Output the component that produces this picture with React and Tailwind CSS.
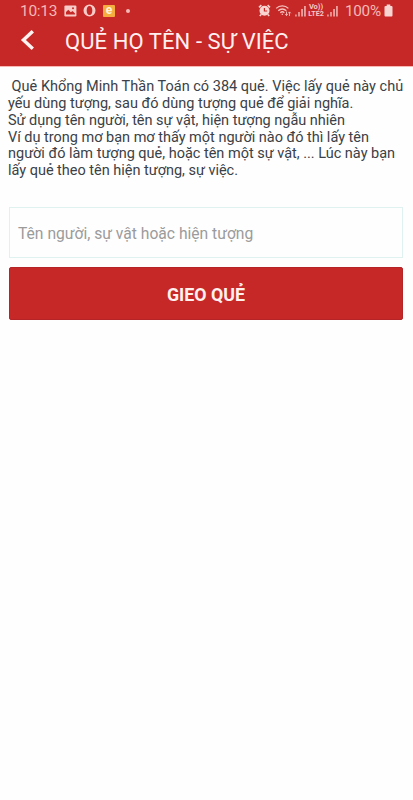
function Signal({ className }) {
  return (
    <svg className={className} width="12" height="12" viewBox="0 0 12 12" fill="#f4bcb8">
      <rect x="0.3" y="9.5" width="1.3" height="2" />
      <rect x="3.3" y="7" width="1.4" height="4.5" />
      <rect x="6.3" y="4" width="1.5" height="7.5" />
      <rect x="9.2" y="1" width="1.5" height="10.5" />
    </svg>
  );
}

function StatusBar() {
  return (
    <div className="flex h-[21px] items-center text-[#f3b9b5]">
      <span className="ml-5 w-[37px] whitespace-nowrap pt-px text-[15.5px] leading-[21px] tracking-[-0.3px]">10:13</span>
      <svg className="ml-[7px] shrink-0" width="13" height="12" viewBox="0 0 13 12">
        <rect x="0.4" y="0.4" width="12" height="11" rx="1.2" fill="#f7cbc7" />
        <path d="M2 9.5V7l2.3-2.2 2.5 2.5L8.5 6l2.4 2.2v1.3z" fill="#c62828" />
        <circle cx="9" cy="3.3" r="1" fill="#c62828" />
      </svg>
      <svg className="ml-[6px] shrink-0" width="13" height="13" viewBox="0 0 13 13">
        <path fillRule="evenodd" d="M6.5.5a6 6 0 1 0 0 12a6 6 0 1 0 0-12zM6.5 2C8.4 2 9.3 4 9.3 6.5S8.4 11 6.5 11 3.7 9 3.7 6.5 4.6 2 6.5 2z" fill="#f7cbc7" />
      </svg>
      <span className="ml-[7px] flex h-3 w-3 shrink-0 items-center justify-center rounded-[1px] bg-[#f5ad3f] text-[12px] font-bold leading-none text-[#fff2d9]">
        <span className="-mt-px">e</span>
      </span>
      <span className="ml-[11px] h-1 w-1 shrink-0 rounded-full bg-[#f3bab6]" />
      <svg className="ml-[128px] shrink-0" width="13" height="13" viewBox="0 0 13 13">
        <circle cx="6.5" cy="6.7" r="5" fill="#f9d3d0" />
        <path d="M1 3.4L3.4 1.2M12 3.4L9.6 1.2M3.1 10.5L1.8 12M9.9 10.5L11.2 12" stroke="#f9d3d0" strokeWidth="1.6" />
        <path d="M6.4 4v3h2.8" fill="none" stroke="#c62828" strokeWidth="1.2" />
      </svg>
      <svg className="ml-[4px] shrink-0" width="17" height="13" viewBox="0 0 17 13" fill="none" stroke="#f5c1bd" strokeWidth="1.3">
        <path d="M1.2 4.4C4.6.9 10 .9 13.4 4.4M3.3 6.7c2.3-2.3 5.7-2.3 8 0M5.3 8.7c1.2-1.1 2.8-1.1 4 0" />
        <circle cx="7.3" cy="10.3" r="0.8" fill="#f5c1bd" stroke="none" />
        <path d="M11.5 7.5v4M10.2 10.2l1.3 1.4 1.3-1.4M14.5 12V8M13.2 9.3l1.3-1.4 1.3 1.4" strokeWidth="0.9" />
      </svg>
      <Signal className="ml-[3px] shrink-0" />
      <div className="ml-px flex w-[16px] shrink-0 flex-col items-center text-[7.5px] font-bold leading-[8px] text-[#f7c9c5]">
        <span>Vo))</span>
        <span className="-mt-px whitespace-nowrap text-[7.2px] leading-[8px]">LTE2</span>
      </div>
      <Signal className="ml-[3px] shrink-0" />
      <span className="ml-[6px] w-[36px] shrink-0 whitespace-nowrap pt-px text-[15.3px] leading-[21px] tracking-[-0.3px]">100%</span>
      <svg className="ml-[3px] shrink-0" width="9" height="13" viewBox="0 0 9 13" fill="#f9d5d2">
        <path d="M2.7.5h3.6v1.4h1.2a1 1 0 0 1 1 1v8.6a1 1 0 0 1-1 1h-6a1 1 0 0 1-1-1V2.9a1 1 0 0 1 1-1h1.2z" />
      </svg>
    </div>
  );
}

const lines = [
  { text: "\u00a0Quẻ Khổng Minh Thần Toán có 384 quẻ. Việc lấy quẻ này chủ", style: "tracking-[0.01px]" },
  { text: "yếu dùng tượng, sau đó dùng tượng quẻ để giải nghĩa.", style: "tracking-[0px]" },
  { text: "Sử dụng tên người, tên sự vật, hiện tượng ngẫu nhiên", style: "tracking-[-0.02px]" },
  { text: "Ví dụ trong mơ bạn mơ thấy một người nào đó thì lấy tên", style: "tracking-[-0.015px]" },
  { text: "người đó làm tượng quẻ, hoặc tên một sự vật, ... Lúc này bạn", style: "tracking-[-0.01px]" },
  { text: "lấy quẻ theo tên hiện tượng, sự việc.", style: "tracking-[-0.02px]" },
];

export default function App() {
  return (
    <div className="h-[800px] w-[413px] overflow-hidden bg-[#fefefe] font-[Roboto,sans-serif]">
      <header className="h-[66px] bg-[#c62828]">
        <StatusBar />
        <div className="flex h-[40px] items-center">
          <svg className="ml-5 shrink-0" width="16" height="22" viewBox="0 0 16 22" fill="none" stroke="#fff3f2" strokeWidth="3.4">
            <path d="M12.8 1.2L3.4 10l9.4 8.8" />
          </svg>
          <h1 className="ml-[29px] whitespace-nowrap pt-[2px] text-[22px] leading-[40px] tracking-[0.08px] text-[#fff0ef]">QUẺ HỌ TÊN - SỰ VIỆC</h1>
        </div>
      </header>
      <div className="h-px bg-[#fab8b5]" />
      <main className="px-[9px] pt-[12px]">
        <div className="h-[101px] text-[14.5px] leading-[16.85px] text-[#3b4146]">
          {lines.map((line) => (
            <p key={line.text} className={`-ml-px whitespace-nowrap ${line.style}`}>{line.text}</p>
          ))}
        </div>
        <input
          className="mt-[27px] block h-[51px] w-[394px] border border-[#dff2ef] bg-[#fefefe] px-2 pt-[2px] text-[15.65px] text-[#999] outline-none placeholder:text-[#9b9b9b]"
          placeholder="Tên người, sự vật hoặc hiện tượng"
        />
        <button className="mt-[9px] block h-[53px] w-[394px] rounded-[2px] border border-[#b52427] bg-[#c62828] pt-[3px] text-[17.8px] font-bold text-[#fff0ee]">
          GIEO QUẺ
        </button>
      </main>
    </div>
  );
}
